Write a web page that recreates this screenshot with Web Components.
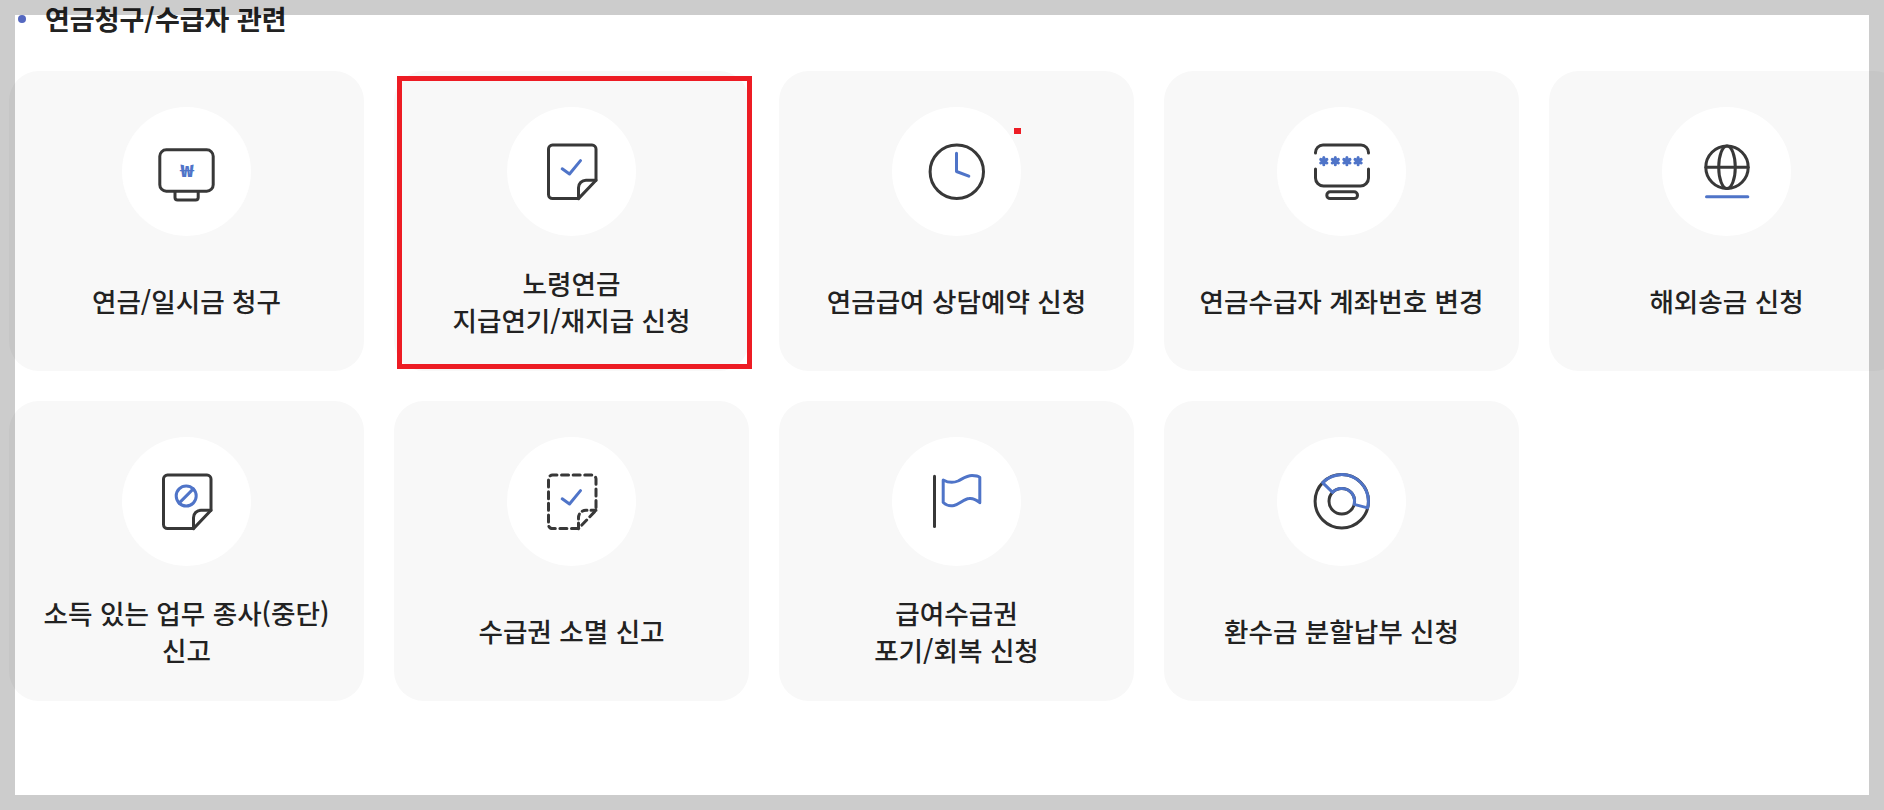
<!DOCTYPE html>
<html lang="ko">
<head>
<meta charset="utf-8">
<title>연금청구/수급자 관련</title>
<style>
  html, body { margin: 0; height: 100%; overflow: hidden; background: #fff; }
  body { font-family: "Noto Sans CJK KR", "Noto Sans", sans-serif; color: #222; }
</style>
</head>
<body>
<service-section heading="연금청구/수급자 관련">
  <service-card icon="won">연금/일시금 청구</service-card>
  <service-card icon="doc-check" marked>노령연금<br>지급연기/재지급 신청</service-card>
  <service-card icon="clock" dotted>연금급여 상담예약 신청</service-card>
  <service-card icon="account">연금수급자 계좌번호 변경</service-card>
  <service-card icon="globe">해외송금 신청</service-card>
  <service-card icon="doc-stop">소득 있는 업무 종사(중단)<br>신고</service-card>
  <service-card icon="doc-dashed">수급권 소멸 신고</service-card>
  <service-card icon="flag">급여수급권<br>포기/회복 신청</service-card>
  <service-card icon="ring">환수금 분할납부 신청</service-card>
</service-section>
<page-frame></page-frame>

<script>
(function() {
'use strict';

const DARK = '#383838';
const BLUE = '#4f74c8';

const star = (x, y) =>
  `M${x},${y - 3.6}V${y + 3.6}M${x - 3.1},${y - 1.8}L${x + 3.1},${y + 1.8}M${x + 3.1},${y - 1.8}L${x - 3.1},${y + 1.8}`;

// the folded sheet is shared by three icons
const SHEET = 'M36.5,56.6H10.5a4,4 0 0 1 -4,-4V7.1a4,4 0 0 1 4,-4H50a4,4 0 0 1 4,4V38.2L36.5,56.6';
const FOLD = 'M54,38.2H44a7.5,7.5 0 0 0 -7.5,7.5V56.6';

const ICONS = {
  'won': `
    <rect class="d" x="2.8" y="7.8" width="53.4" height="41.4" rx="6.5"/>
    <path class="d" d="M18,49.5V55.5a2.6,2.6 0 0 0 2.6,2.6H38.6a2.6,2.6 0 0 0 2.6,-2.6V49.5"/>
    <text transform="translate(30 34.6) scale(1.3 1)" text-anchor="middle" font-size="17" font-weight="900" fill="${BLUE}" font-family="Noto Sans CJK KR, sans-serif">₩</text>`,
  'doc-check': `
    <path class="d" d="${SHEET}"/><path class="d" d="${FOLD}"/>
    <path class="b" d="M20.2,26.8L27.5,32L38.5,18.6"/>`,
  'clock': `
    <circle class="d" cx="29.8" cy="29.8" r="26.7"/>
    <path class="b" d="M29.5,11.2V29.5L41.8,34.2"/>`,
  'account': `
    <path class="d" d="M3.5,11V10.5a7.5,7.5 0 0 1 7.5,-7.5H49a7.5,7.5 0 0 1 7.5,7.5V11"/>
    <path class="d" d="M3.5,27V36a8,8 0 0 0 8,8H48.5a8,8 0 0 0 8,-8V27"/>
    <rect class="d" x="14.8" y="49.8" width="30.7" height="6.8" rx="3.4"/>
    <path class="b" stroke-width="2.2" stroke-linecap="butt" d="${star(11.8, 19.2)}${star(23.3, 19.2)}${star(34.9, 19.2)}${star(46.1, 19.2)}"/>`,
  'globe': `
    <circle class="d" cx="30" cy="25.3" r="21.2"/>
    <ellipse class="d" cx="30" cy="25.3" rx="8.3" ry="21.2"/>
    <path class="d" d="M9,25.3H51"/>
    <path class="b" d="M9.5,54.8H50.8"/>`,
  'doc-stop': `
    <path class="d" d="${SHEET}"/><path class="d" d="${FOLD}"/>
    <circle class="b" cx="29.2" cy="24" r="10"/>
    <path class="b" stroke-linecap="butt" d="M36.3,16.9L22.1,31.1"/>`,
  'doc-dashed': `
    <path class="d" stroke-width="3.4" stroke-linecap="butt" stroke-dasharray="7 4.6" d="${SHEET}"/>
    <path class="d" stroke-width="3.4" stroke-linecap="butt" stroke-dasharray="5 4" d="${FOLD}"/>
    <path class="b" d="M20.2,26.8L27.5,32L38.5,18.6"/>`,
  'flag': `
    <path class="d" stroke-width="3.4" d="M7.5,4.2V54.6"/>
    <path class="b" d="M16.2,8C21,10.6 26,11.2 31,9C36,6.5 40,3.6 45,3.6C48,3.6 51,4 52.8,5.5V30.7C49,27.4 46,26 42,26.5C37,27 33,32 27,33.5C23,34.5 19,33 16.2,30.5Z"/>`,
  'ring': `
    <circle class="d" cx="29.8" cy="29.2" r="26.7"/>
    <circle class="d" cx="29.8" cy="29.2" r="12.8"/>
    <path class="b" d="M10.6,10.7L20.6,20.3A12.8,12.8 0 0 1 42.2,32.4L55.6,35.9A26.7,26.7 0 0 0 10.6,10.7Z"/>`
};

customElements.define('service-icon', class extends HTMLElement {
  constructor() {
    super();
    this.attachShadow({mode: 'open'});
  }
  connectedCallback() {
    this.shadowRoot.innerHTML = `
      <style>
        :host { display: block; width: 60px; height: 60px; }
        svg { display: block; overflow: visible; }
        .d, .b { fill: none; stroke-width: 3; stroke-linecap: round; stroke-linejoin: round; }
        .d { stroke: ${DARK}; }
        .b { stroke: ${BLUE}; }
      </style>
      <svg width="60" height="60" viewBox="0 0 60 60" aria-hidden="true">${ICONS[this.getAttribute('name')] || ''}</svg>
    `;
  }
});

customElements.define('service-card', class extends HTMLElement {
  constructor() {
    super();
    this.attachShadow({mode: 'open'});
  }
  connectedCallback() {
    this.shadowRoot.innerHTML = `
      <style>
        :host {
          display: flex;
          flex-direction: column;
          align-items: center;
          position: relative;
          height: 300px;
          padding-top: 36px;
          box-sizing: border-box;
          background: #f8f8f8;
          border-radius: 30px;
        }
        .disc {
          display: flex;
          align-items: center;
          justify-content: center;
          width: 129px;
          height: 129px;
          border-radius: 50%;
          background: #fff;
        }
        .label {
          flex: 1;
          display: flex;
          align-items: center;
          padding-bottom: 6px;
          text-align: center;
          font-size: 26.6px;
          font-weight: 500;
          line-height: 37px;
          color: #222;
        }
        /* review marks that sit on top of the card */
        .box {
          position: absolute;
          left: 3px;
          top: 5px;
          width: 355px;
          height: 293px;
          box-sizing: border-box;
          border: 5px solid #ed1c24;
        }
        .dot {
          position: absolute;
          left: 235px;
          top: 57px;
          width: 7px;
          height: 6px;
          background: #ed1c24;
        }
      </style>
      <div class="disc"><service-icon name="${this.getAttribute('icon')}"></service-icon></div>
      <div class="label"><span><slot></slot></span></div>
      ${this.hasAttribute('marked') ? '<div class="box"></div>' : ''}
      ${this.hasAttribute('dotted') ? '<div class="dot"></div>' : ''}
    `;
  }
});

customElements.define('service-section', class extends HTMLElement {
  constructor() {
    super();
    this.attachShadow({mode: 'open'});
  }
  connectedCallback() {
    this.shadowRoot.innerHTML = `
      <style>
        :host { display: block; padding-left: 9px; }
        h2 {
          display: flex;
          align-items: center;
          gap: 19px;
          height: 38px;
          margin: 0 0 33px 9px;
          font-size: 27px;
          font-weight: 700;
          line-height: 38px;
          color: #222;
        }
        h2::before {
          content: "";
          width: 8px;
          height: 8px;
          border-radius: 50%;
          background: #5568c0;
        }
        .grid {
          display: grid;
          grid-template-columns: repeat(5, 355px);
          gap: 30px;
        }
      </style>
      <h2>${this.getAttribute('heading')}</h2>
      <div class="grid"><slot></slot></div>
    `;
  }
});

// translucent screenshot border, the page shows through it
customElements.define('page-frame', class extends HTMLElement {
  constructor() {
    super();
    this.attachShadow({mode: 'open'}).innerHTML = `
      <style>
        :host {
          display: block;
          position: fixed;
          inset: 0;
          box-sizing: border-box;
          border: 15px solid rgba(0, 0, 0, 0.2);
          pointer-events: none;
        }
      </style>
    `;
  }
});

})();
</script>
</body>
</html>
